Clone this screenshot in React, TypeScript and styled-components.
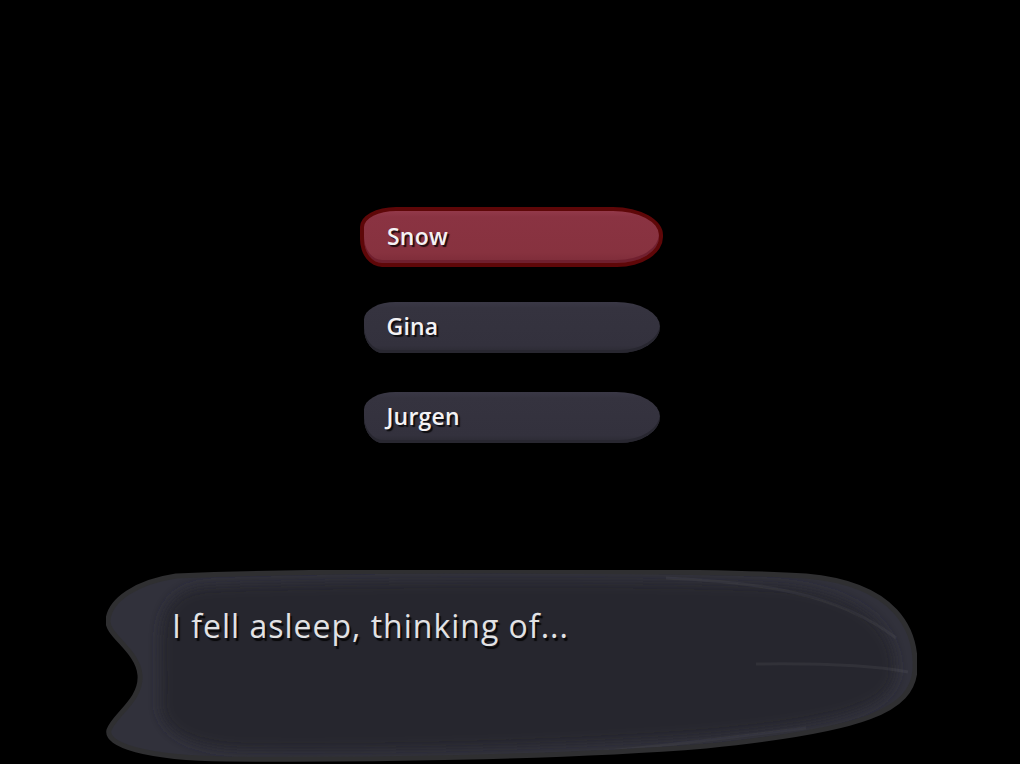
import React from "react";
import styled, { createGlobalStyle } from "styled-components";

const Global = createGlobalStyle`
  html, body { margin: 0; padding: 0; background: #000; }
  body { width: 1020px; height: 764px; overflow: hidden; font-family: "Open Sans", "Noto Sans", sans-serif; }
`;

const Page = styled.div`
  width: 1020px;
  height: 764px;
  background: #000;
  display: flex;
  flex-direction: column;
  align-items: center;
  box-sizing: border-box;
  padding-top: 192px;
`;

const Menu = styled.div`
  display: flex;
  flex-direction: column;
  align-items: center;
  padding-left: 3px;
`;

const Row = styled.div`
  height: 90px;
  width: 320px;
  display: flex;
  align-items: center;
  justify-content: center;
`;

const Option = styled.button<{ $selected?: boolean }>`
  box-sizing: border-box;
  display: flex;
  align-items: center;
  width: ${(p) => (p.$selected ? "303px" : "296px")};
  height: ${(p) => (p.$selected ? "60px" : "51px")};
  padding: 0 0 2px ${(p) => (p.$selected ? "23px" : "23px")};
  border: ${(p) => (p.$selected ? "4px solid #5e0708" : "none")};
  border-radius: 36px 50px 46px 22px / 20px 28px 30px 28px;
  background: ${(p) =>
    p.$selected
      ? "linear-gradient(#93394a 0px, #8a3342 6px, #87323f 80%, #7d2c39 100%)"
      : "linear-gradient(#3a3846 0px, #35333f 6px, #33313d 85%, #2b2a33 100%)"};
  box-shadow: ${(p) =>
    p.$selected ? "inset 0 -3px 0 rgba(110,30,45,0.9)" : "inset 0 -3px 0 rgba(40,39,48,1)"};
  font-family: "Open Sans", "Noto Sans", sans-serif;
  font-weight: 600;
  font-size: 23px;
  letter-spacing: 0.2px;
  color: #f4f2f4;
  text-shadow: 2px 2px 1px rgba(0, 0, 0, 0.75);
  cursor: pointer;
  line-height: 1;
`;

const Dialog = styled.div`
  position: relative;
  width: 811px;
  height: 193px;
  margin-top: auto;
  margin-bottom: 1px;
  margin-left: 3px;
  box-sizing: border-box;
  padding: 37px 0 0 66px;
`;

const Shape = styled.svg`
  position: absolute;
  left: 0;
  top: 0;
  width: 811px;
  height: 193px;
  z-index: 0;
`;

const Line = styled.p`
  position: relative;
  z-index: 1;
  margin: 0;
  font-family: "Open Sans", "Noto Sans", sans-serif;
  font-size: 32px;
  letter-spacing: 1px;
  line-height: 1.2;
  color: #e2e2e4;
  text-shadow: 2px 3px 1px rgba(0, 0, 0, 0.8);
`;

const OUTLINE =
  "M 70 6 C 250 -1, 600 0, 700 6 C 790 14, 811 60, 809 100 C 806 140, 760 160, 600 176 C 450 188, 250 190, 120 189 C 40 188, -1 175, 3 160 C 8 145, 36 130, 34 105 C 32 80, 0 65, 2 50 C 4 30, 30 12, 70 6 Z";

const options = ["Snow", "Gina", "Jurgen"];

export default function App() {
  return (
    <>
      <Global />
      <Page>
        <Menu>
          {options.map((o, i) => (
            <Row key={o}>
              <Option $selected={i === 0}>{o}</Option>
            </Row>
          ))}
        </Menu>
        <Dialog>
          <Shape viewBox="0 0 811 193">
            <defs>
              <filter id="soft" x="-10%" y="-10%" width="120%" height="120%">
                <feGaussianBlur stdDeviation="6" />
              </filter>
              <clipPath id="clip">
                <path d={OUTLINE} />
              </clipPath>
            </defs>
            <path d={OUTLINE} fill="#31313b" />
            <g clipPath="url(#clip)">
              <path
                filter="url(#soft)"
                d="M 100 16 C 250 9, 600 9, 680 16 C 760 26, 790 60, 790 100 C 788 135, 750 152, 600 166 C 450 178, 250 182, 140 180 C 80 178, 52 160, 54 130 C 56 100, 50 60, 60 40 C 68 25, 80 18, 100 16 Z"
                fill="#26262e"
              />
              <path d="M 560 8 C 650 12, 730 22, 790 68" stroke="rgba(255,255,255,0.045)" strokeWidth="3" fill="none" />
              <path d="M 650 94 C 720 93, 770 96, 802 102" stroke="rgba(255,255,255,0.05)" strokeWidth="3" fill="none" />
              <path d="M 490 182 C 560 176, 620 168, 700 158" stroke="rgba(255,255,255,0.035)" strokeWidth="3" fill="none" />
            </g>
            <path d={OUTLINE} fill="none" stroke="#2f2f31" strokeWidth="5" />
          </Shape>
          <Line>I fell asleep, thinking of...</Line>
        </Dialog>
      </Page>
    </>
  );
}
